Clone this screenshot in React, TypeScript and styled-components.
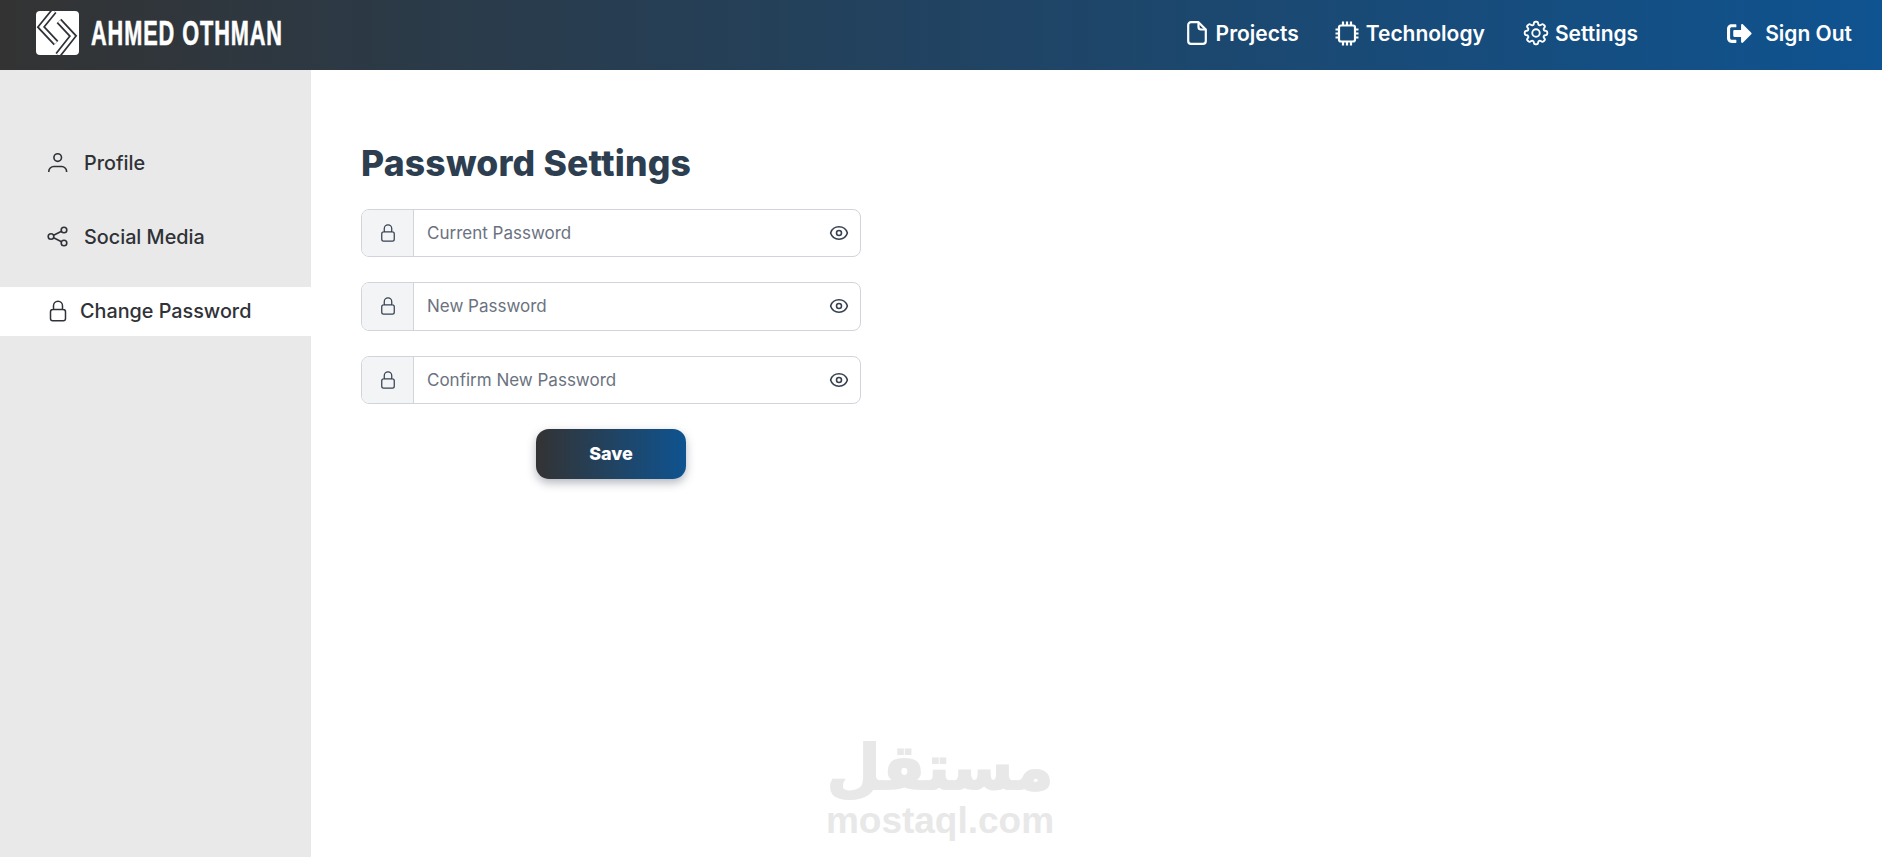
import styled, { createGlobalStyle } from 'styled-components';
import { FaSignOutAlt } from 'react-icons/fa';
import { HiOutlineCog8Tooth, HiOutlineEye, HiOutlineLockClosed } from 'react-icons/hi2';

const GlobalStyle = createGlobalStyle`
  html, body {
    margin: 0;
    height: 100%;
    overflow: hidden;
    background: #fff;
    font-family: Inter, "Noto Sans", sans-serif;
  }
  * { box-sizing: border-box; }
`;

const FileIcon = () => (
  <svg width="20" height="24" viewBox="0 0 20 24" fill="none" stroke="currentColor" strokeWidth="2.2" strokeLinejoin="round">
    <path d="M4 1.2 H11.5 L18.8 8.5 V20 A2.8 2.8 0 0 1 16 22.8 H4 A2.8 2.8 0 0 1 1.2 20 V4 A2.8 2.8 0 0 1 4 1.2 Z" />
    <path d="M11.5 1.2 V6 A2.5 2.5 0 0 0 14 8.5 H18.8" />
  </svg>
);

const ChipIcon = () => (
  <svg width="24" height="25" viewBox="0 0 24 25" fill="none" stroke="currentColor" strokeWidth="2.2" strokeLinejoin="round">
    <rect x="4" y="4.5" width="16" height="16" rx="2" />
    <path d="M8 0.5 V4 M12 0.5 V4 M16 0.5 V4 M8 21 V24.5 M12 21 V24.5 M16 21 V24.5 M0.5 8.5 H4 M0.5 12.5 H4 M0.5 16.5 H4 M20 8.5 H23.5 M20 12.5 H23.5 M20 16.5 H23.5" />
  </svg>
);

const UserIcon = () => (
  <svg width="24" height="24" viewBox="0 0 24 24" fill="none" stroke="currentColor" strokeWidth="1.6">
    <circle cx="11.7" cy="6.6" r="3.8" />
    <path d="M2.8 21 V20.5 A5 5 0 0 1 7.8 15.5 H15.6 A5 5 0 0 1 20.6 20.5 V21" />
  </svg>
);

const ShareIcon = () => (
  <svg width="24" height="24" viewBox="0 0 24 24" fill="none" stroke="currentColor" strokeWidth="1.6">
    <circle cx="5" cy="11.5" r="2.8" />
    <circle cx="18" cy="5" r="2.8" />
    <circle cx="18" cy="18" r="2.8" />
    <path d="M7.6 10.2 L15.5 6.3 M7.6 12.8 L15.5 16.7" />
  </svg>
);

const navItems = [
  { label: 'Projects', icon: <FileIcon />, gap: 9 },
  { label: 'Technology', icon: <ChipIcon />, gap: 7 },
  { label: 'Settings', icon: <HiOutlineCog8Tooth size={30} />, gap: 4 },
];

const sideItems = [
  { label: 'Profile', icon: <UserIcon /> },
  { label: 'Social Media', icon: <ShareIcon /> },
  { label: 'Change Password', icon: <HiOutlineLockClosed size={24} />, active: true },
];

const fields = ['Current Password', 'New Password', 'Confirm New Password'];

const Logo = () => (
  <svg width="43" height="44" viewBox="0 0 43 44">
    <rect width="43" height="44" rx="4" fill="#fff" />
    <path d="M18 0 L5 16 L20 32" fill="none" stroke="#2f3237" strokeWidth="6.5" />
    <path d="M18 0 L5 16 L20 32" fill="none" stroke="#fff" strokeWidth="3" />
    <path d="M23 10 L37 25 L22 44" fill="none" stroke="#2f3237" strokeWidth="6.5" />
    <path d="M23 10 L37 25 L22 44" fill="none" stroke="#fff" strokeWidth="3" />
  </svg>
);

export default function App() {
  return (
    <Page>
      <GlobalStyle />
      <Header>
        <Brand>
          <Logo />
          <BrandName>AHMED OTHMAN</BrandName>
        </Brand>
        <Nav>
          {navItems.map((item) => (
            <NavLink key={item.label} $gap={item.gap}>
              {item.icon}
              {item.label}
            </NavLink>
          ))}
        </Nav>
        <SignOut>
          <FaSignOutAlt size={25} />
          Sign Out
        </SignOut>
      </Header>
      <Body>
        <Sidebar>
          {sideItems.map((item) => (
            <SideItem key={item.label} $active={item.active}>
              {item.icon}
              {item.label}
            </SideItem>
          ))}
        </Sidebar>
        <Main>
          <Title>Password Settings</Title>
          <Form>
            {fields.map((field) => (
              <Field key={field}>
                <Addon>
                  <HiOutlineLockClosed size={20} />
                </Addon>
                <Input type="password" placeholder={field} />
                <EyeButton>
                  <HiOutlineEye size={20} strokeWidth={1.9} />
                </EyeButton>
              </Field>
            ))}
            <SaveButton type="button">Save</SaveButton>
          </Form>
        </Main>
      </Body>
      <Watermark>
        <WatermarkArabic>مستقل</WatermarkArabic>
        <WatermarkLatin>mostaql.com</WatermarkLatin>
      </Watermark>
    </Page>
  );
}

const Page = styled.div`
  position: relative;
  height: 100vh;
  display: flex;
  flex-direction: column;
`;

const Header = styled.header`
  height: 70px;
  flex: none;
  display: flex;
  align-items: center;
  padding: 0 30px 4px 36px;
  color: #fff;
  background: linear-gradient(90deg, #333 0%, #0f5390 100%);
`;

const Brand = styled.div`
  display: flex;
  align-items: center;
  gap: 12px;
`;

const BrandName = styled.span`
  display: inline-block;
  font-family: "Liberation Sans", sans-serif;
  font-size: 35px;
  font-weight: 700;
  letter-spacing: 1.5px;
  white-space: nowrap;
  -webkit-text-stroke: 0.6px #fff;
  transform: scaleX(0.62);
  transform-origin: left center;
`;

const Nav = styled.nav`
  margin-left: auto;
  display: flex;
  align-items: center;
  gap: 36px;
`;

const NavLink = styled.a<{ $gap: number }>`
  display: flex;
  align-items: center;
  gap: ${(p) => p.$gap}px;
  font-size: 21px;
  font-weight: 600;
`;

const SignOut = styled.a`
  margin-left: 89px;
  display: flex;
  align-items: center;
  gap: 13px;
  font-size: 21px;
  font-weight: 600;
`;

const Body = styled.div`
  flex: 1;
  display: flex;
`;

const Sidebar = styled.aside`
  width: 311px;
  flex: none;
  background: #e9e9e9;
  padding-top: 69px;
  display: flex;
  flex-direction: column;
  gap: 25px;
`;

const SideItem = styled.div<{ $active?: boolean }>`
  height: 49px;
  display: flex;
  align-items: center;
  gap: ${(p) => (p.$active ? 10 : 14)}px;
  padding: 0 0 1px 46px;
  font-size: 19.8px;
  font-weight: 500;
  color: #2f3237;
  background: ${(p) => (p.$active ? '#fff' : 'transparent')};
`;

const Main = styled.main`
  flex: 1;
  padding: 72px 0 0 50px;
`;

const Title = styled.h1`
  margin: 0 0 23px;
  font-size: 35.5px;
  line-height: 44px;
  font-weight: 800;
  letter-spacing: 0.2px;
  color: #2c3e50;
`;

const Form = styled.form`
  width: 500px;
  display: flex;
  flex-direction: column;
  gap: 25px;
`;

const Field = styled.div`
  height: 48.33px;
  display: flex;
  align-items: center;
  border: 1px solid #d1d5db;
  border-radius: 8px;
  overflow: hidden;
`;

const Addon = styled.div`
  width: 52px;
  height: 100%;
  flex: none;
  display: flex;
  align-items: center;
  justify-content: center;
  color: #374151;
  background: #f3f4f6;
  border-right: 1px solid #d1d5db;
`;

const Input = styled.input`
  flex: 1;
  min-width: 0;
  height: 100%;
  border: 0;
  outline: 0;
  padding: 0 13px;
  font-family: inherit;
  font-size: 17px;
  color: #374151;
  &::placeholder {
    color: #6b7280;
    opacity: 1;
  }
`;

const EyeButton = styled.span`
  display: flex;
  margin-right: 11px;
  color: #374151;
`;

const SaveButton = styled.button`
  align-self: center;
  width: 150px;
  height: 50px;
  border: 0;
  border-radius: 13px;
  color: #fff;
  font-family: inherit;
  font-size: 18px;
  font-weight: 800;
  background: linear-gradient(90deg, #333 0%, #0f5390 100%);
  box-shadow: 0 4px 10px rgba(40, 50, 70, 0.35);
`;

const Watermark = styled.div`
  position: absolute;
  left: 828px;
  top: 733px;
  width: 224px;
  display: flex;
  flex-direction: column;
  align-items: center;
  color: #e8e8e8;
  pointer-events: none;
`;

const WatermarkArabic = styled.span`
  font-family: "DejaVu Sans", sans-serif;
  font-size: 62px;
  line-height: 70px;
  font-weight: 700;
  -webkit-text-stroke: 2px #e8e8e8;
`;

const WatermarkLatin = styled.span`
  font-family: "Liberation Sans", sans-serif;
  font-size: 37px;
  line-height: 36px;
  font-weight: 700;
`;
